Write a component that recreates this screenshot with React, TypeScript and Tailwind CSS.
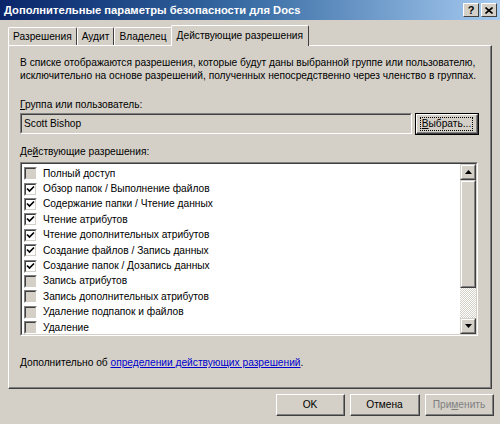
import React from 'react';

const perms: { label: string; checked: boolean }[] = [
    { label: 'Полный доступ', checked: false },
    { label: 'Обзор папок / Выполнение файлов', checked: true },
    { label: 'Содержание папки / Чтение данных', checked: true },
    { label: 'Чтение атрибутов', checked: true },
    { label: 'Чтение дополнительных атрибутов', checked: true },
    { label: 'Создание файлов / Запись данных', checked: true },
    { label: 'Создание папок / Дозапись данных', checked: true },
    { label: 'Запись атрибутов', checked: false },
    { label: 'Запись дополнительных атрибутов', checked: false },
    { label: 'Удаление подпапок и файлов', checked: false },
    { label: 'Удаление', checked: false },
];

const CheckBox = ({ checked }: { checked: boolean }) => (
    <div className="w-[13px] h-[13px] shrink-0 border-t border-l border-[#808080] border-b border-r border-b-white border-r-white">
        <div className={`w-full h-full border-t border-l border-[#404040] border-b border-r border-b-[#d4d0c8] border-r-[#d4d0c8] ${checked ? 'bg-white' : 'bg-[#d4d0c8]'}`}>
            {checked && (
                <svg width="9" height="9" viewBox="0 0 9 9" className="block">
                    <path d="M1 3.5 L3.5 6 L8 1.5" stroke="#000" strokeWidth="1.7" fill="none" />
                </svg>
            )}
        </div>
    </div>
);

const Button = ({ children, disabled, focused }: { children: React.ReactNode; disabled?: boolean; focused?: boolean }) => (
    <div className={`h-[22px] flex ${focused ? 'border border-black' : ''}`}>
        <div className="flex-1 border-t border-l border-white border-b border-r border-b-[#404040] border-r-[#404040]">
            <div className={`h-full flex items-center justify-center border-b border-r border-[#808080] ${disabled ? 'text-[#808080]' : 'text-black'}`}>
                {children}
            </div>
        </div>
    </div>
);

export default function App() {
    return (
        <div
            className="w-[500px] h-[424px] bg-[#d4d0c8] flex flex-col text-[10.2px] text-black overflow-hidden whitespace-nowrap"
            style={{ fontFamily: '"Liberation Sans", Arial, sans-serif' }}
        >
            {/* Title bar */}
            <div className="h-[20px] shrink-0 flex items-center justify-between pl-[4px] pr-[3px] bg-gradient-to-r from-[#0a246a] via-[#3a6ea5] to-[#a6caf0]">
                <span className="text-white font-bold text-[11.2px]">Дополнительные параметры безопасности для Docs</span>
                <div className="flex gap-[2px]">
                    <div className="w-[16px] h-[14px] bg-[#d4d0c8] border-t border-l border-white border-b border-r border-b-[#404040] border-r-[#404040] flex items-center justify-center font-bold text-[11px] leading-none">?</div>
                    <div className="w-[16px] h-[14px] bg-[#d4d0c8] border-t border-l border-white border-b border-r border-b-[#404040] border-r-[#404040] flex items-center justify-center">
                        <svg width="8" height="7" viewBox="0 0 8 7">
                            <path d="M0.5 0.5 L7.5 6.5 M7.5 0.5 L0.5 6.5" stroke="#000" strokeWidth="1.6" />
                        </svg>
                    </div>
                </div>
            </div>

            {/* Tabs */}
            <div className="h-[25px] shrink-0 flex items-end pl-[8px]">
                {['Разрешения', 'Аудит', 'Владелец'].map(t => (
                    <div key={t} className="h-[18px] px-[4px] flex items-center border-t border-l border-white border-r border-r-[#404040] rounded-t-[2px]">
                        {t}
                    </div>
                ))}
                <div className="h-[21px] px-[5px] flex items-center bg-[#d4d0c8] border-t border-l border-white border-r border-r-[#404040] rounded-t-[2px] -mb-[1px] relative z-10 -ml-[1px]">
                    Действующие разрешения
                </div>
            </div>

            {/* Tab panel */}
            <div className="mx-[8px] h-[344px] shrink-0 border-t border-l border-white border-b border-r border-b-[#404040] border-r-[#404040]">
                <div className="h-full border-b border-r border-[#808080] pl-[11px] pr-[11px] pt-[10px] flex flex-col">
                    <p className="leading-[13px]">
                        В списке отображаются разрешения, которые будут даны выбранной группе или пользователю,
                        <br />
                        исключительно на основе разрешений, полученных непосредственно через членство в группах.
                    </p>

                    <div className="mt-[16px] leading-[13px]">
                        <span className="underline">Г</span>руппа или пользователь:
                    </div>
                    <div className="mt-[2px] flex items-stretch gap-[3px] h-[21px]">
                        <div className="flex-1 border-t border-l border-[#808080] border-b border-r border-b-white border-r-white">
                            <div className="h-full border-t border-l border-[#404040] border-b border-r border-b-[#d4d0c8] border-r-[#d4d0c8] flex items-center pl-[2px]">
                                Scott Bishop
                            </div>
                        </div>
                        <div className="w-[64px]">
                            <Button focused>
                                <span className="outline outline-1 outline-dotted outline-black px-[1px] leading-[12px]">
                                    <span className="underline">В</span>ыбрать...
                                </span>
                            </Button>
                        </div>
                    </div>

                    <div className="mt-[11px] leading-[13px]">
                        Де<span className="underline">й</span>ствующие разрешения:
                    </div>
                    <div className="mt-[4px] h-[174px] w-[458px] border-t border-l border-[#808080] border-b border-r border-b-white border-r-white">
                        <div className="h-full flex border-t border-l border-[#404040] border-b border-r border-b-[#d4d0c8] border-r-[#d4d0c8] bg-white">
                            <div className="flex-1 pt-[2px] pl-[2px]">
                                {perms.map(p => (
                                    <div key={p.label} className="h-[15.4px] flex items-center gap-[6px]">
                                        <CheckBox checked={p.checked} />
                                        <span className="leading-none">{p.label}</span>
                                    </div>
                                ))}
                            </div>
                            {/* Scrollbar */}
                            <div className="w-[16px] flex flex-col bg-[#e8e6e1]">
                                <div className="h-[16px] bg-[#d4d0c8] border-t border-l border-[#d4d0c8] border-b border-r border-b-[#404040] border-r-[#404040]">
                                    <div className="h-full border-t border-l border-white border-b border-r border-b-[#808080] border-r-[#808080] flex items-center justify-center">
                                        <svg width="7" height="4" viewBox="0 0 7 4"><path d="M3.5 0 L7 4 L0 4 Z" fill="#000" /></svg>
                                    </div>
                                </div>
                                <div className="h-[108px] bg-[#d4d0c8] border-t border-l border-[#d4d0c8] border-b border-r border-b-[#404040] border-r-[#404040]">
                                    <div className="h-full border-t border-l border-white border-b border-r border-b-[#808080] border-r-[#808080]" />
                                </div>
                                <div className="flex-1" style={{ backgroundImage: 'repeating-conic-gradient(#d4d0c8 0% 25%, #ffffff 0% 50%)', backgroundSize: '2px 2px' }} />
                                <div className="h-[16px] bg-[#d4d0c8] border-t border-l border-[#d4d0c8] border-b border-r border-b-[#404040] border-r-[#404040]">
                                    <div className="h-full border-t border-l border-white border-b border-r border-b-[#808080] border-r-[#808080] flex items-center justify-center">
                                        <svg width="7" height="4" viewBox="0 0 7 4"><path d="M0 0 L7 0 L3.5 4 Z" fill="#000" /></svg>
                                    </div>
                                </div>
                            </div>
                        </div>
                    </div>

                    <div className="mt-[20px] leading-[13px]">
                        Дополнительно об <span className="text-[#0000cc] underline">определении действующих разрешений</span>.
                    </div>
                </div>
            </div>

            {/* Bottom buttons */}
            <div className="flex justify-end gap-[5px] pr-[6px] pt-[5px]">
                <div className="w-[69px]"><Button>OK</Button></div>
                <div className="w-[70px]"><Button>Отмена</Button></div>
                <div className="w-[69px]"><Button disabled>При<span className="underline">м</span>енить</Button></div>
            </div>
        </div>
    );
}
